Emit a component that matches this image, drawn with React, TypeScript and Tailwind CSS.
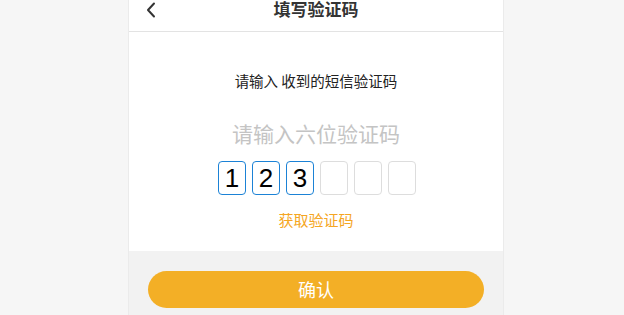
const digits = ["1", "2", "3", "", "", ""];

const App = () => {
  return (
    <div
      className="flex min-h-screen justify-center bg-[#f6f6f6] pl-[8px]"
      style={{ fontFamily: '"Noto Sans CJK SC", "Noto Sans", sans-serif' }}
    >
      <div className="flex w-[376px] flex-col border-x border-[#ebebeb] bg-white">
        <header className="relative flex h-[32px] items-center justify-center border-b border-[#e3e3e3]">
          <svg
            className="absolute left-[16px] top-[2px] h-[16px] w-[12px]"
            viewBox="0 0 12 16"
            fill="none"
            stroke="#333"
            strokeWidth={2}
            strokeLinecap="round"
            strokeLinejoin="round"
          >
            <path d="M9 1.5 L3 8 L9 14.5" />
          </svg>
          <h1 className="-mt-[14px] text-[17px] font-bold text-[#333]">填写验证码</h1>
        </header>

        <main className="flex flex-col items-center pt-[39px]">
          <p className="text-[14.5px] leading-[20px] text-[#222]">请输入 收到的短信验证码</p>
          <p className="mt-[28px] text-[21px] leading-[28px] text-[#c4c4c4]">请输入六位验证码</p>

          <div className="mt-[14px] flex gap-[6px] pl-[2px]">
            {digits.map((d, i) => (
              <div
                key={i}
                className={`flex h-[34px] w-[28px] items-center justify-center rounded-[4px] border text-[26px] text-black ${
                  d ? "border-[#1b82d6]" : "border-[#dddddd]"
                }`}
                style={{ fontFamily: '"Liberation Sans", Arial, sans-serif' }}
              >
                {d}
              </div>
            ))}
          </div>

          <button className="mt-[15px] text-[15px] leading-[20px] text-[#f5a623]">获取验证码</button>
        </main>

        <div className="mt-[21px] flex flex-1 flex-col bg-[#f2f2f2] px-[19px] pt-[20px]">
          <button className="h-[37px] w-full rounded-full bg-[#f3af26] text-[18px] text-white">确认</button>
        </div>
      </div>
    </div>
  );
};

export default App;
